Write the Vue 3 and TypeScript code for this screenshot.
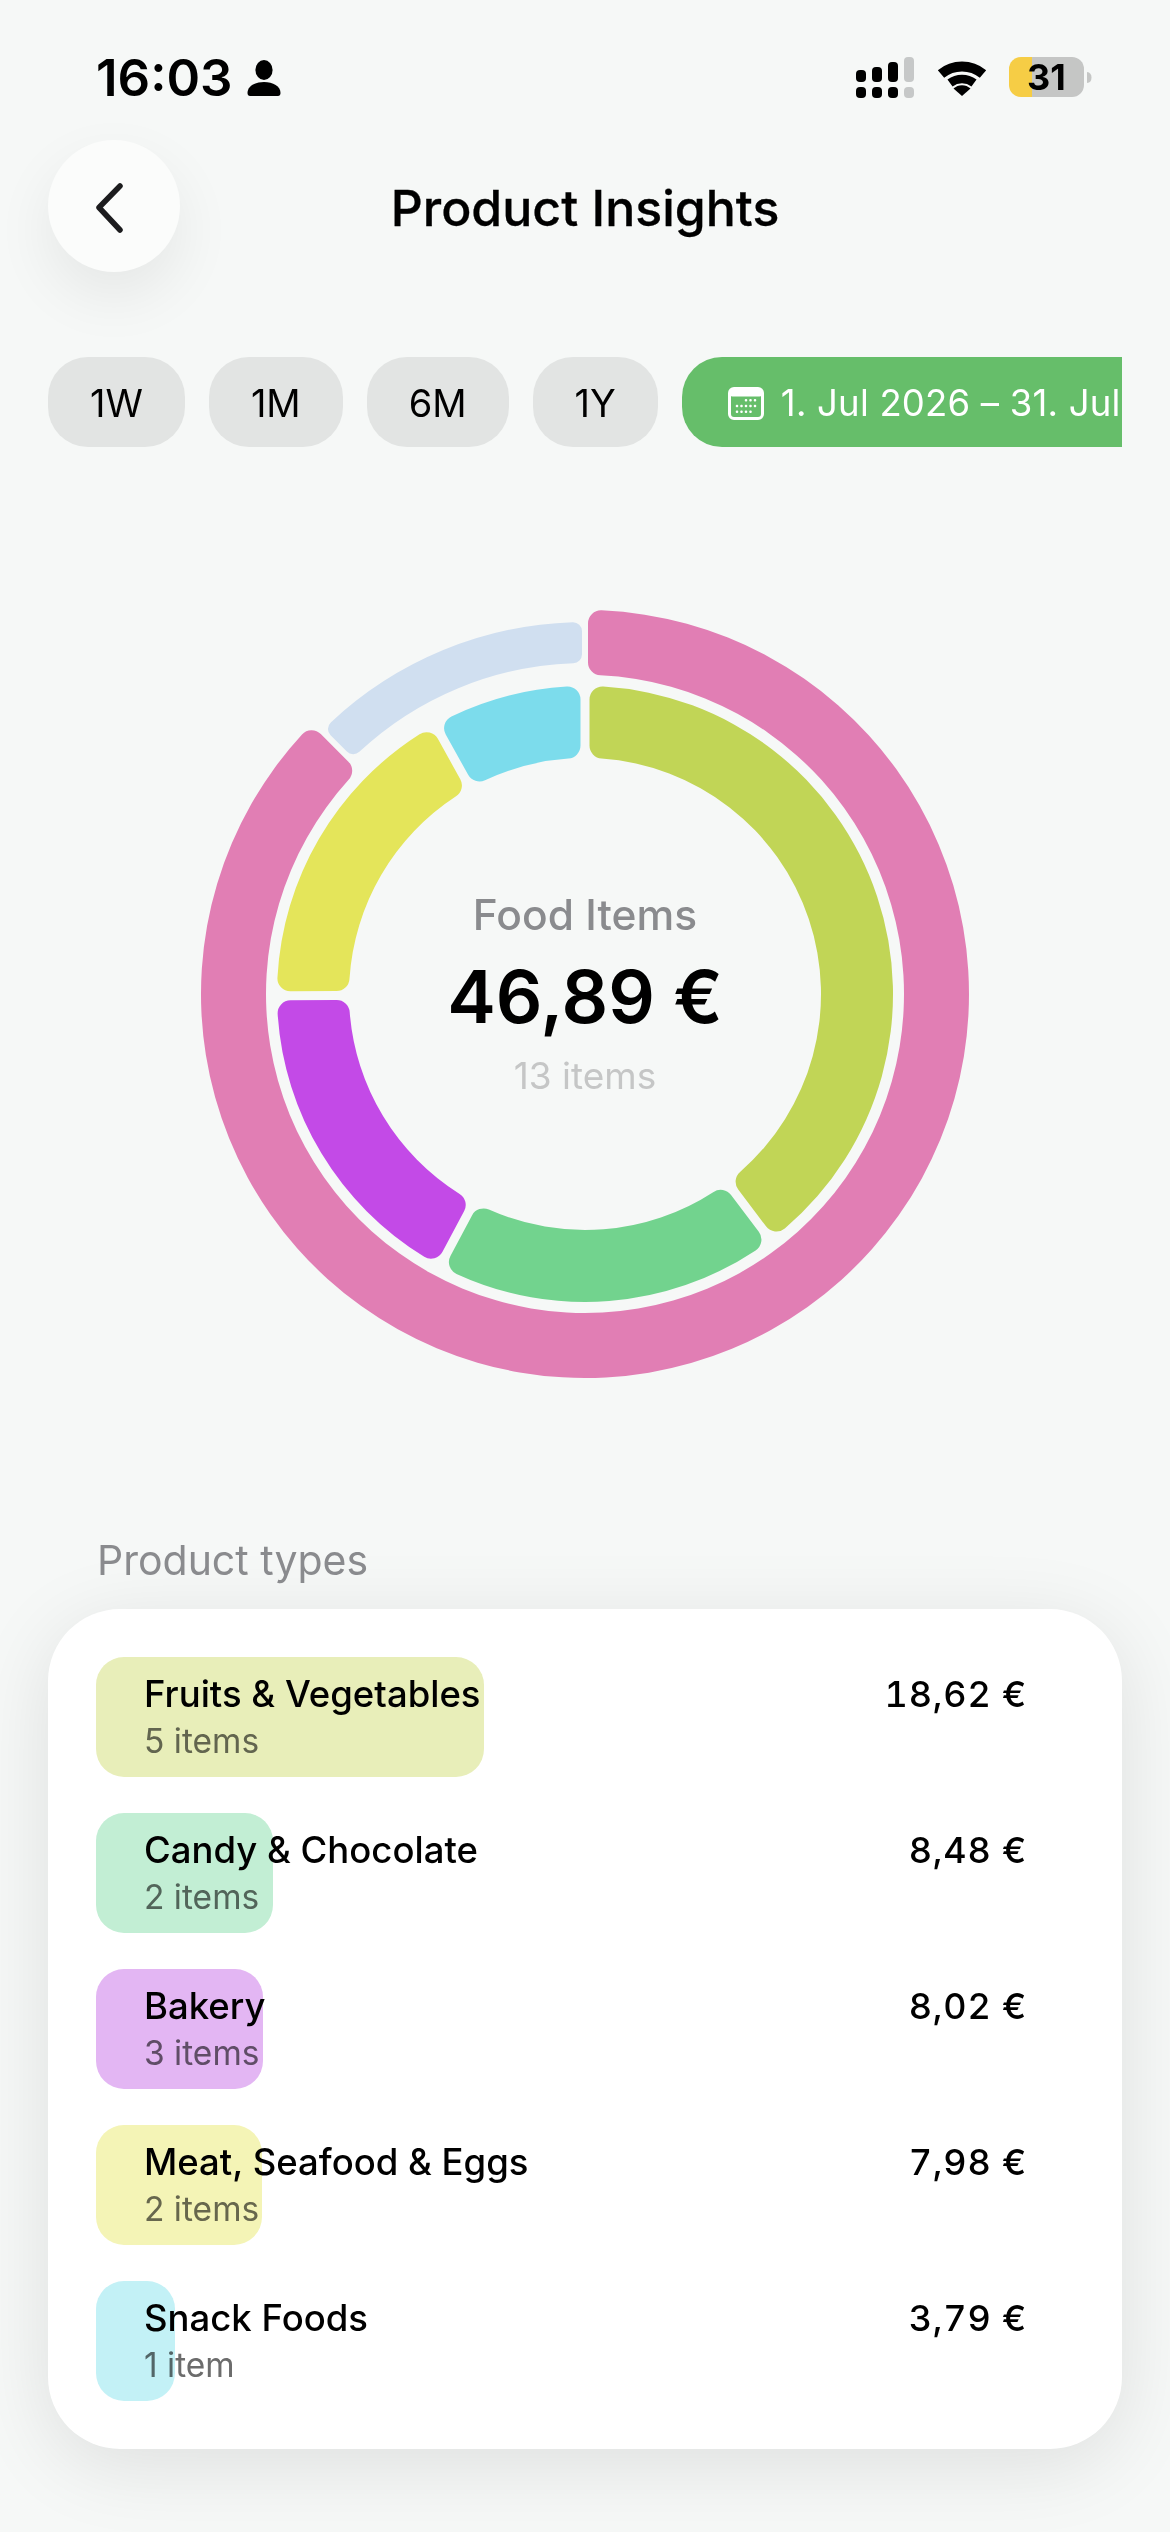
<script setup lang="ts">
interface Row { name: string; sub: string; amount: number; tint: string }

const rows: Row[] = [
  { name: 'Fruits & Vegetables', sub: '5 items', amount: 18.62, tint: '#e8eeb9' },
  { name: 'Candy & Chocolate', sub: '2 items', amount: 8.48, tint: '#c2eed4' },
  { name: 'Bakery', sub: '3 items', amount: 8.02, tint: '#e3b6f3' },
  { name: 'Meat, Seafood & Eggs', sub: '2 items', amount: 7.98, tint: '#f4f4b6' },
  { name: 'Snack Foods', sub: '1 item', amount: 3.79, tint: '#c3f1f6' },
]

const euro = (v: number) => v.toFixed(2).replace('.', ',') + ' €'
const barWidth = (v: number) => (v / 18.62) * 388 + 'px'

const CX = 392
const CY = 392

function pt(r: number, deg: number, off = 0): string {
  const a = (deg * Math.PI) / 180
  const ux = Math.sin(a)
  const uy = -Math.cos(a)
  const px = Math.cos(a)
  const py = Math.sin(a)
  return `${(CX + ux * r + px * off).toFixed(2)} ${(CY + uy * r + py * off).toFixed(2)}`
}

function sector(a1: number, a2: number, r: number, R: number, gap: number, c: number): string {
  const h = gap / 2
  const deg = 180 / Math.PI
  const oa = Math.asin((h + c) / (R - c)) * deg
  const ia = Math.asin((h + c) / (r + c)) * deg
  const ol = Math.sqrt((R - c) ** 2 - (h + c) ** 2)
  const il = Math.sqrt((r + c) ** 2 - (h + c) ** 2)
  const large = a2 - a1 - 2 * oa > 180 ? 1 : 0
  const largeIn = a2 - a1 - 2 * ia > 180 ? 1 : 0
  return [
    `M ${pt(il, a1, h)}`,
    `L ${pt(ol, a1, h)}`,
    `A ${c} ${c} 0 0 1 ${pt(R, a1 + oa)}`,
    `A ${R} ${R} 0 ${large} 1 ${pt(R, a2 - oa)}`,
    `A ${c} ${c} 0 0 1 ${pt(ol, a2, -h)}`,
    `L ${pt(il, a2, -h)}`,
    `A ${c} ${c} 0 0 1 ${pt(r, a2 - ia)}`,
    `A ${r} ${r} 0 ${largeIn} 0 ${pt(r, a1 + ia)}`,
    `A ${c} ${c} 0 0 1 ${pt(il, a1, h)}`,
    'Z',
  ].join(' ')
}

const total = 46.89
const innerColors = ['#c1d556', '#72d38e', '#c34ae7', '#e4e55a', '#7cdcec']
let acc = 0
const innerSegs = rows.map((row, i) => {
  const a1 = acc
  acc += (row.amount / total) * 360
  return { d: sector(a1, Math.min(acc, 360), 236, 308, 9, 13), color: innerColors[i] }
})
const outerSegs = [
  { d: sector(0, 315, 319, 384, 6, 13), color: '#e17eb4' },
  { d: sector(315, 360, 331, 372, 6, 9), color: '#d0dff0' },
]

const dots = [0, 1, 2, 3]
const dotTops = [70, 67, 62, 57]
const calDots = [
  [18, 13.3], [22.5, 13.3], [27, 13.3],
  [9, 19], [13.5, 19], [18, 19], [22.5, 19], [27, 19],
  [9, 24.7], [13.5, 24.7], [18, 24.7], [22.5, 24.7],
]
</script>

<template>
  <div class="page">
    <div class="status">
      <div class="status-left">
        <span class="time">16:03</span>
        <svg class="person" width="34" height="36" viewBox="0 0 34 36">
          <ellipse cx="17" cy="10" rx="8.600" ry="10" fill="#000" />
          <path d="M0.500 33 C0.500 26 8 22 17 22 C26 22 33.500 26 33.500 33 C33.500 35 32.500 36 31 36 L3 36 C1.500 36 0.500 35 0.500 33 Z" fill="#000" />
        </svg>
      </div>
      <svg class="status-right" width="240" height="50" viewBox="856 52 240 50">
        <g v-for="i in dots" :key="i">
          <rect :x="856 + i * 16" :y="dotTops[i]" width="10" :height="82 - dotTops[i]" rx="4" :fill="i === 3 ? '#c6c8c8' : '#000'" />
          <rect :x="856 + i * 16" y="87" width="10" height="11" rx="4" :fill="i === 3 ? '#c6c8c8' : '#000'" />
        </g>
        <path d="M941 74 A 33 33 0 0 1 983 74" fill="none" stroke="#000" stroke-width="10" />
        <path d="M950 83 A 20 20 0 0 1 974 83" fill="none" stroke="#000" stroke-width="8.500" />
        <path d="M962 96 L953.500 88.500 A 12.500 12.500 0 0 1 970.500 88.500 Z" fill="#000" />
        <path d="M1032 57 L1021 57 A12 12 0 0 0 1009 69 L1009 85 A12 12 0 0 0 1021 97 L1032 97 Z" fill="#f6cd45" />
        <path d="M1032 57 L1072 57 A12 12 0 0 1 1084 69 L1084 85 A12 12 0 0 1 1072 97 L1032 97 Z" fill="#c5c6c5" />
        <path d="M1087 72 Q1091.500 72.500 1091.500 77.500 Q1091.500 82.500 1087 83 Z" fill="#c5c6c5" />
        <text x="1046.500" y="90" text-anchor="middle" class="batt">31</text>
      </svg>
    </div>

    <header class="header">
      <button class="back" type="button" aria-label="Back">
        <svg width="32" height="52" viewBox="0 0 32 52">
          <path d="M26 5 L5 26.500 L26 49" fill="none" stroke="#1c1c1e" stroke-width="5.500" stroke-linecap="round" stroke-linejoin="round" />
        </svg>
      </button>
      <h1 class="title">Product Insights</h1>
    </header>

    <div class="chips">
      <span class="chip">1W</span>
      <span class="chip">1M</span>
      <span class="chip">6M</span>
      <span class="chip">1Y</span>
      <span class="chip chip-active">
        <svg class="cal" width="36" height="33" viewBox="0 0 36 33">
          <rect x="1.500" y="1.500" width="33" height="30" rx="4.500" fill="none" stroke="#fff" stroke-width="3" />
          <rect x="1.500" y="1.500" width="33" height="8" rx="3" fill="#fff" />
          <rect v-for="(p, i) in calDots" :key="i" :x="p[0] - 1.25" :y="p[1] - 1.25" width="2.500" height="2.500" rx="1" fill="#fff" />
        </svg>
        1. Jul 2026 – 31. Jul 2026
      </span>
    </div>

    <section class="donut">
      <svg width="784" height="784" viewBox="0 0 784 784">
        <path v-for="(s, i) in outerSegs" :key="'o' + i" :d="s.d" :fill="s.color" />
        <path v-for="(s, i) in innerSegs" :key="'i' + i" :d="s.d" :fill="s.color" />
      </svg>
      <div class="center">
        <div class="center-label">Food Items</div>
        <div class="center-value">46,89 €</div>
        <div class="center-sub">13 items</div>
      </div>
    </section>

    <div class="section-label">Product types</div>

    <section class="card">
      <div v-for="row in rows" :key="row.name" class="row">
        <div class="bar" :style="{ width: barWidth(row.amount), background: row.tint }"></div>
        <div class="row-text">
          <div class="row-name">{{ row.name }}</div>
          <div class="row-sub">{{ row.sub }}</div>
        </div>
        <div class="row-amount">{{ euro(row.amount) }}</div>
      </div>
    </section>
  </div>
</template>

<style scoped>
.page {
  width: 1170px;
  height: 2532px;
  background: #f6f8f7;
  overflow: hidden;
  font-family: Inter, "Liberation Sans", sans-serif;
  color: #000;
  box-sizing: border-box;
}
.status {
  height: 140px;
  display: flex;
  justify-content: space-between;
  align-items: flex-start;
  padding: 0 74px 0 96px;
}
.status-left {
  display: flex;
  align-items: center;
  gap: 14px;
  height: 60px;
  margin-top: 48px;
}
.time {
  font-size: 51px;
  font-weight: 600;
  line-height: 60px;
}
.status-right {
  margin-top: 52px;
  display: block;
}
.batt {
  font-family: Inter, sans-serif;
  font-size: 36px;
  font-weight: 700;
  fill: #000;
}
.header {
  position: relative;
  height: 132px;
  display: flex;
  align-items: center;
  justify-content: center;
}
.back {
  position: absolute;
  left: 48px;
  top: 0;
  width: 132px;
  height: 132px;
  border: none;
  padding: 0;
  border-radius: 50%;
  background: #fbfcfb;
  box-shadow: 0 24px 60px rgba(0, 0, 0, 0.07);
  display: flex;
  align-items: center;
  justify-content: center;
}
.back svg {
  margin: 2px 0 0 -9px;
}
.title {
  margin: 0;
  padding-top: 3px;
  font-size: 50px;
  font-weight: 500;
  line-height: 60px;
  -webkit-text-stroke: 0.3px #000;
}
.chips {
  margin: 85px 48px 0;
  height: 90px;
  display: flex;
  gap: 24px;
  overflow: hidden;
}
.chip {
  flex: none;
  height: 90px;
  box-sizing: border-box;
  padding: 2px 42px 0;
  border-radius: 40px;
  background: #e2e4e3;
  display: flex;
  align-items: center;
  font-size: 38px;
  line-height: 44px;
  white-space: nowrap;
}
.chip-active {
  background: #66be6a;
  color: #fff;
  padding: 2px 46px 0;
  gap: 17px;
  font-size: 36.500px;
  letter-spacing: 0.2px;
}
.cal {
  flex: none;
}
.donut {
  position: relative;
  margin: 155px auto 0;
  width: 784px;
  height: 784px;
}
.donut svg {
  display: block;
}
.center {
  position: absolute;
  inset: 0;
  display: flex;
  flex-direction: column;
  align-items: center;
  justify-content: center;
}
.center-label {
  font-size: 42.500px;
  font-weight: 500;
  line-height: 50px;
  color: #8a8b8e;
}
.center-value {
  font-size: 73px;
  font-weight: 600;
  line-height: 90px;
  margin-top: 12px;
}
.center-sub {
  font-size: 37px;
  line-height: 44px;
  margin-top: 12px;
  color: #c5c6c6;
}
.section-label {
  margin: 150px 0 0 97px;
  font-size: 41px;
  line-height: 48px;
  color: #8a8b8e;
}
.card {
  margin: 25px 48px 0;
  padding: 48px;
  background: #fff;
  border-radius: 72px;
  box-shadow: 0 16px 80px rgba(0, 0, 0, 0.1);
  display: flex;
  flex-direction: column;
  gap: 36px;
}
.row {
  position: relative;
  height: 120px;
  display: flex;
  align-items: flex-start;
  justify-content: space-between;
  padding: 0 47px 0 48px;
}
.bar {
  position: absolute;
  left: 0;
  top: 0;
  height: 120px;
  border-radius: 28px;
}
.row-text {
  position: relative;
  padding-top: 15px;
}
.row-name {
  font-size: 36.500px;
  line-height: 44px;
  font-weight: 500;
  white-space: nowrap;
}
.row-sub {
  font-size: 33.500px;
  line-height: 40px;
  margin-top: 5px;
  color: #6c6c6c;
  mix-blend-mode: multiply;
  white-space: nowrap;
}
.row-amount {
  position: relative;
  padding-top: 15px;
  font-size: 36px;
  line-height: 44px;
  font-weight: 500;
  letter-spacing: 0.8px;
  font-variant-numeric: tabular-nums;
}
</style>

<style>
body {
  background: #f6f8f7;
}
</style>
